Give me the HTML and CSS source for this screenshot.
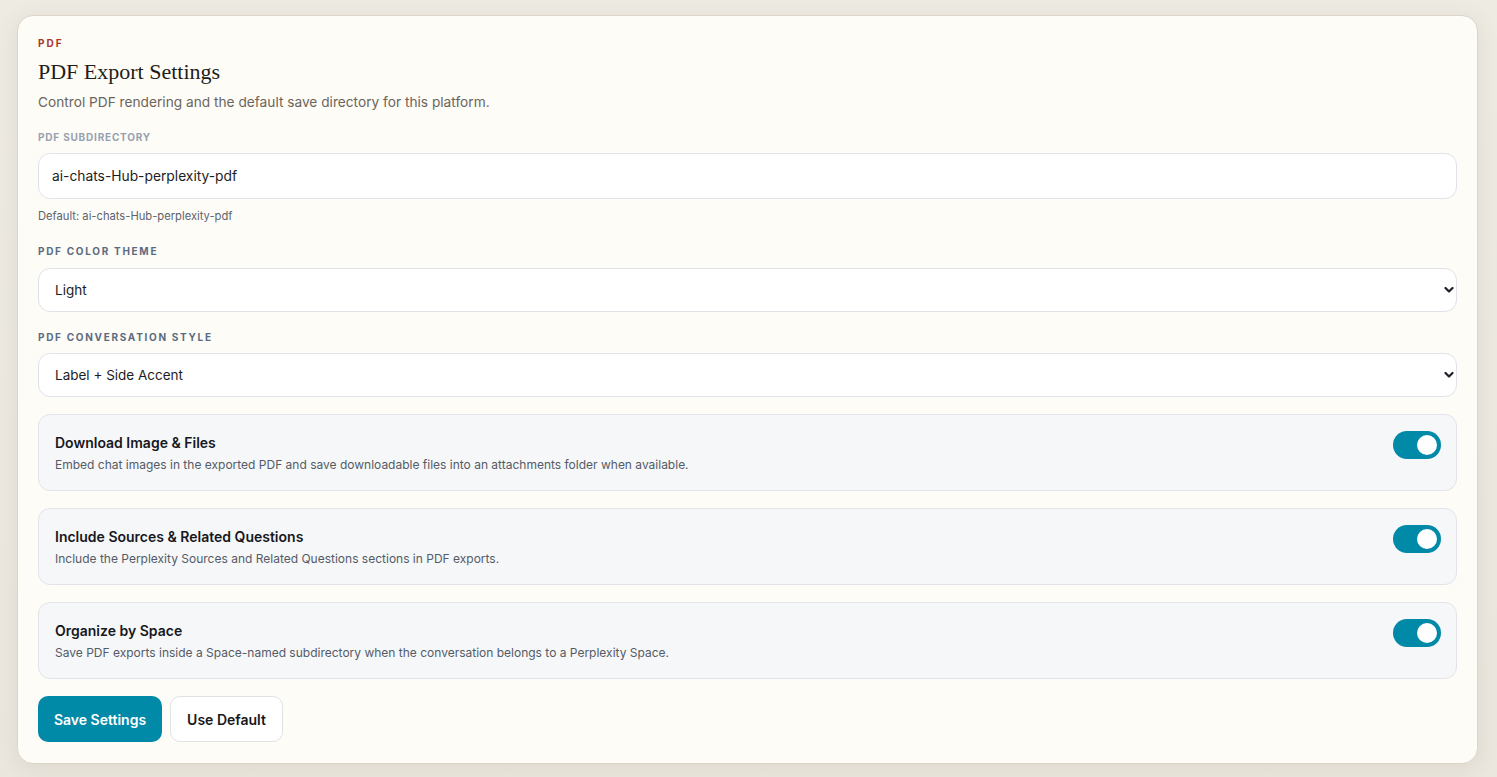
FILE: index.html
```html
<!DOCTYPE html>
<html lang="en">

<head>
    <meta charset="UTF-8">
    <meta name="viewport" content="width=device-width, initial-scale=1.0">
    <title>PDF Export Settings</title>
    <link rel="stylesheet" href="styles.css">
</head>

<body>
    <div class="card">
        <div class="eyebrow">PDF</div>
        <h1 class="title">PDF Export Settings</h1>
        <p class="subtitle">Control PDF rendering and the default save directory for this platform.</p>

        <label class="label label-muted" for="subdir">PDF Subdirectory</label>
        <input class="field" id="subdir" type="text" value="ai-chats-Hub-perplexity-pdf" />
        <div class="hint">Default: ai-chats-Hub-perplexity-pdf</div>

        <label class="label" for="theme">PDF Color Theme</label>
        <div class="select-wrap">
            <select class="field select" id="theme">
                <option>Light</option>
                <option>Dark</option>
            </select>
            <svg class="chevron" width="10" height="7" viewBox="0 0 10 7">
                <path d="M1.5 1.5 L5 5 L8.5 1.5" fill="none" stroke="#1f2128" stroke-width="2.2" stroke-linecap="round" stroke-linejoin="round" />
            </svg>
        </div>

        <label class="label label-second" for="style">PDF Conversation Style</label>
        <div class="select-wrap">
            <select class="field select" id="style">
                <option>Label + Side Accent</option>
                <option>Bubbles</option>
            </select>
            <svg class="chevron" width="10" height="7" viewBox="0 0 10 7">
                <path d="M1.5 1.5 L5 5 L8.5 1.5" fill="none" stroke="#1f2128" stroke-width="2.2" stroke-linecap="round" stroke-linejoin="round" />
            </svg>
        </div>

        <div class="option">
            <div class="option-text">
                <div class="option-title">Download Image &amp; Files</div>
                <div class="option-desc">Embed chat images in the exported PDF and save downloadable files into an attachments folder when available.</div>
            </div>
            <span class="switch"><span class="knob"></span></span>
        </div>

        <div class="option">
            <div class="option-text">
                <div class="option-title">Include Sources &amp; Related Questions</div>
                <div class="option-desc">Include the Perplexity Sources and Related Questions sections in PDF exports.</div>
            </div>
            <span class="switch"><span class="knob"></span></span>
        </div>

        <div class="option">
            <div class="option-text">
                <div class="option-title">Organize by Space</div>
                <div class="option-desc">Save PDF exports inside a Space-named subdirectory when the conversation belongs to a Perplexity Space.</div>
            </div>
            <span class="switch"><span class="knob"></span></span>
        </div>

        <div class="actions">
            <button class="btn btn-primary">Save Settings</button>
            <button class="btn btn-ghost">Use Default</button>
        </div>
    </div>
</body>

</html>
```

FILE: styles.css
```css
* {
    padding: 0;
    margin: 0;
    box-sizing: border-box;
}

body {
    background: linear-gradient(180deg, #eeebe3 0%, #ebe7de 100%);
    padding: 15px 19px 15px 17px;
    font-family: Inter, "Liberation Sans", sans-serif;
    color: #1d1f24;
}

.card {
    background-color: #fdfcf7;
    border: 1px solid #ddd6c8;
    border-radius: 16px;
    box-shadow: 0 4px 22px rgba(90, 80, 60, 0.10);
    padding: 20px 20px 21px;
}

.eyebrow {
    font-size: 10px;
    line-height: 14px;
    font-weight: 700;
    letter-spacing: 2px;
    color: #a5382a;
}

.title {
    margin-top: 8px;
    font: 400 22px/28px "Liberation Serif", "DejaVu Serif", serif;
    color: #1f1d19;
}

.subtitle {
    margin-top: 6px;
    font-size: 13.7px;
    line-height: 20px;
    color: #6b655c;
}

.label {
    display: block;
    margin-top: 18px;
    font-size: 10px;
    line-height: 14px;
    font-weight: 700;
    letter-spacing: 1.7px;
    text-transform: uppercase;
    color: #5a6b81;
}

.label-muted {
    letter-spacing: 0.8px;
    color: #97a1b0;
}

.field {
    display: block;
    width: 100%;
    margin-top: 9px;
    height: 46px;
    padding: 0 13px;
    border: 1px solid #e1e2e8;
    border-radius: 12px;
    background-color: #fff;
    font: 400 13.8px Inter, "Liberation Sans", sans-serif;
    color: #1c1d22;
    outline: none;
}

.hint {
    margin-top: 10px;
    font-size: 11.2px;
    line-height: 14px;
    color: #5e636d;
}

.hint + .label {
    margin-top: 21px;
}

.select-wrap {
    position: relative;
    margin-top: 10px;
}

.label-second + .select-wrap {
    margin-top: 9px;
}

.select {
    height: 44px;
    margin-top: 0;
    padding: 0 16px;
    font-size: 13.5px;
    appearance: none;
    -webkit-appearance: none;
}

.chevron {
    position: absolute;
    right: 3px;
    top: 50%;
    transform: translateY(-50%);
    pointer-events: none;
}

.option {
    display: flex;
    justify-content: space-between;
    align-items: flex-start;
    margin-top: 17px;
    padding: 18px 15px 17px 16px;
    background-color: #f6f7f9;
    border: 1px solid #e2e4e9;
    border-radius: 12px;
}

.option-title {
    font-size: 14px;
    line-height: 19px;
    font-weight: 600;
    color: #16181d;
}

.option-desc {
    margin-top: 5px;
    font-size: 12px;
    line-height: 16px;
    color: #545b66;
}

.switch {
    position: relative;
    flex: none;
    width: 48px;
    height: 28px;
    margin-top: -2px;
    border-radius: 14px;
    background-color: #0189a8;
}

.knob {
    position: absolute;
    top: 4px;
    right: 4px;
    width: 20px;
    height: 20px;
    border-radius: 50%;
    background-color: #fff;
}

.actions {
    display: flex;
    gap: 8px;
    margin-top: 17px;
}

.btn {
    height: 46px;
    border-radius: 10px;
    font: 600 14px Inter, "Liberation Sans", sans-serif;
    cursor: pointer;
}

.btn-primary {
    width: 124px;
    border: none;
    background-color: #0189a8;
    color: #fff;
}

.btn-ghost {
    width: 113px;
    border: 1px solid #e1e2e6;
    background-color: #fff;
    color: #17181c;
}
```
